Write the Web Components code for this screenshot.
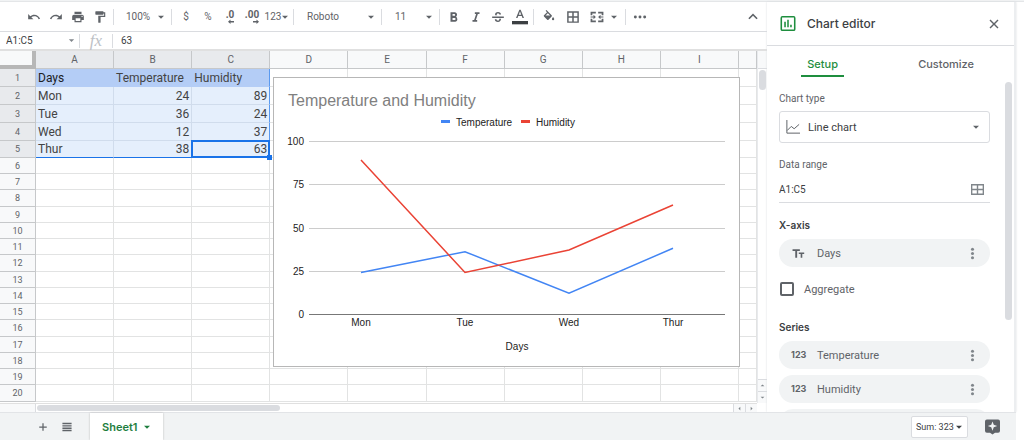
<!DOCTYPE html>
<html lang="en">
<head>
<meta charset="utf-8">
<title>Sheet1 - Chart editor</title>
<style>
  html, body { margin: 0; height: 100%; background: #fff; }
  body { font-family: Roboto, "Liberation Sans", sans-serif; color: #5f6368; overflow: hidden; }
</style>
</head>
<body>
<sheet-app></sheet-app>
<script>
const RESET = `*,*::before,*::after{box-sizing:border-box}
button,input,select{font:inherit;color:inherit;background:none;border:0;margin:0;padding:0;outline:0;border-radius:0;min-width:0}
select{appearance:none}`;

function define(name, markup, setup) {
  const tpl = document.createElement('template');
  tpl.innerHTML = `<style>${RESET}</style>${markup}`;
  customElements.define(name, class extends HTMLElement {
    connectedCallback() {
      if (this.shadowRoot) return;
      const root = this.attachShadow({ mode: 'open' });
      root.append(tpl.content.cloneNode(true));
      if (setup) setup(this, root);
    }
  });
}

const ICONS = {
  undo: '<path d="M12.5 8c-2.65 0-5.05 1-6.9 2.6L2 7v9h9l-3.62-3.62A8 8 0 0 1 20 16l2.4-.8C21 11 17 8 12.500 8z"/>',
  redo: '<path d="M18.400 10.600C16.550 9 14.150 8 11.500 8 7 8 3 11 1.600 15.200L4 16a8 8 0 0 1 12.600-3.600L13 16h9V7z"/>',
  print: '<path d="M19 8H5a3 3 0 0 0-3 3v6h4v4h12v-4h4v-6a3 3 0 0 0-3-3zm-3 11H8v-5h8zm3-7a1 1 0 1 1 0-2 1 1 0 0 1 0 2zM18 3H6v4h12z"/>',
  paint: '<path d="M18 4V3a1 1 0 0 0-1-1H5a1 1 0 0 0-1 1v4c0 .6.500 1 1 1h12c.6 0 1-.4 1-1V6h1v4H9v11c0 .6.500 1 1 1h2c.6 0 1-.4 1-1v-9h8V4z"/>',
  left: '<path d="M10 2v6h14v6H10v6L0 11z"/>',
  right: '<path d="M14 2v6H0v6h14v6l10-9z"/>',
  caret: '<path d="M3 8h18l-9 9z"/>',
  bold: '<path d="M15.600 10.800c1-.7 1.650-1.800 1.650-2.800C17.250 5.700 15.500 4 13.250 4H6v16h8.040c2.090 0 3.710-1.700 3.710-3.800 0-1.600-.86-2.900-2.150-5.400zM9.500 7h3a1.500 1.500 0 0 1 0 3h-3zm3.500 10H9.500v-3.500H13a1.750 1.750 0 0 1 0 3.500z"/>',
  italic: '<path d="M10 4v3h2.200l-3.400 10H6v3h8v-3h-2.200l3.400-10H18V4z"/>',
  strike: '<path d="M2 11h20v2.500H2zM7 9c-.5-4 2-5.500 5-5.500 3.200 0 5.200 1.700 5.200 4.300h-3c0-1.300-.8-2-2.200-2-1.900 0-2.800 1.200-1.800 2.700L11 9zM14 15h3.200c0 3.500-2 5.500-5.200 5.500-3.400 0-5.500-1.900-5.500-4.800h3c0 1.600 1 2.500 2.600 2.500 1.500 0 2.500-1 1.900-3.200z"/>',
  color: '<path d="M11 1 6 13.500h2.300l1.100-3h5.200l1.100 3H18L13 1zm-.8 7.500L12 3.700l1.800 4.800z"/><path fill="#3c4043" d="M0 18h24v5H0z"/>',
  fill: '<path d="M16.600 9 7.600 0 6.200 1.400l2.400 2.400L3.400 9c-.6.6-.6 1.500 0 2.100l5.500 5.500c.3.300.7.400 1.100.4s.800-.1 1.100-.4l5.500-5.500c.5-.6.500-1.500 0-2.100zM6 9.500l4-4 4 4zM19 12s-2 2.200-2 3.500a2 2 0 0 0 4 0c0-1.300-2-3.500-2-3.500z"/>',
  grid: '<path d="M2 2v20h20V2zm8.700 17.500H4.500v-6.200h6.200zm0-8.800H4.500V4.500h6.200zm8.800 8.800h-6.200v-6.200h6.200zm0-8.800h-6.200V4.500h6.200z"/>',
  wide: '<path d="M0 2v20h24V2zm10.700 17.500H2.500v-6.200h8.200zm0-8.800H2.500V4.500h8.200zm10.800 8.800h-8.200v-6.200h8.200zm0-8.800h-8.200V4.500h8.200z"/>',
  merge: '<path d="M1 3h9v3H4v3H1zM14 3h9v6h-3V6h-6zM1 15h3v3h6v3H1zM20 15h3v6h-9v-3h6zM1 11h5V8l4 4-4 4v-3H1zM23 11h-5V8l-4 4 4 4v-3h5z"/>',
  more: '<circle cx="4" cy="12" r="2.500"/><circle cx="12" cy="12" r="2.500"/><circle cx="20" cy="12" r="2.500"/>',
  dots: '<circle cx="12" cy="4" r="2.800"/><circle cx="12" cy="12" r="2.800"/><circle cx="12" cy="20" r="2.800"/>',
  up: '<path d="m12 6-8 8 2 2 6-6 6 6 2-2z"/>',
  close: '<path d="m21 5-2-2-7 7-7-7-2 2 7 7-7 7 2 2 7-7 7 7 2-2-7-7z"/>',
  plus: '<path d="M21 13.500h-7.500V21h-3v-7.500H3v-3h7.500V3h3v7.500H21z"/>',
  list: '<path d="M1 2h22v3.500H1zm0 5.500h22V11H1zM1 13h22v3.500H1zm0 5.500h22V22H1z"/>',
  chart: '<path fill-rule="evenodd" d="M3 0h18a3 3 0 0 1 3 3v18a3 3 0 0 1-3 3H3a3 3 0 0 1-3-3V3a3 3 0 0 1 3-3zm-.5 2.500v19h19v-19zM6 9h2.500v9H6zm4.800-3h2.400v12h-2.400zm4.700 8H18v4h-2.500z"/>',
  line: '<path fill="none" stroke="currentColor" stroke-width="1.700" d="M1.500 0v22.500H24M2 18l7-7 5 4 8.500-7.500"/>',
  text: '<path d="M1 4v3.500h5V20h3.500V7.500h5V4zM22.500 10h-10v3h3.500v7h3v-7h3.500z"/>',
  explore: '<path fill-rule="evenodd" d="M3 0h18a3 3 0 0 1 3 3v15a3 3 0 0 1-3 3h-5l-4 3-4-3H3a3 3 0 0 1-3-3V3a3 3 0 0 1 3-3zm9 3-2 5.500L4.500 10.500 10 12.500l2 5.500 2-5.500 5.500-2L14 8.500z"/>'
};

define('ui-icon', `<style>
  :host{display:inline-flex;width:14px;height:14px;flex:none}
  svg{width:100%;height:100%;display:block;fill:currentColor}
</style><svg viewBox="0 0 24 24" aria-hidden="true"></svg>`, (el, root) => {
  root.querySelector('svg').innerHTML = ICONS[el.getAttribute('name')];
});

/* A square toolbar button: icon or short text in the slot. */
define('tool-button', `<style>
  :host{display:flex;width:22px;height:22px}
  button{display:flex;flex:1;align-items:center;justify-content:center;font-size:10px;line-height:14px}
</style><button type="button"><slot></slot></button>`, (el, root) => {
  root.querySelector('button').setAttribute('aria-label', el.getAttribute('label'));
});

/* A drop-down with its own arrow. */
define('drop-down', `<style>
  :host{display:flex;align-items:center;position:relative;font-size:10px}
  select{flex:1;width:100%;height:100%;padding:0 0 0 var(--pad,10px)}
  ui-icon{position:absolute;right:4px;width:8px;height:8px;pointer-events:none}
</style><select><option></option></select><ui-icon name="caret"></ui-icon>`, (el, root) => {
  root.querySelector('option').textContent = el.getAttribute('value');
  root.querySelector('select').setAttribute('aria-label', el.getAttribute('label'));
});

define('tool-bar', `<style>
  :host{display:flex;align-items:center;height:30px;padding:0 3px 0 23px;border-bottom:1px solid #dadce0;color:#5f6368}
  i{width:1px;height:16px;background:#dadce0;margin:0 3px 0 2px;flex:none}
  .dec{display:flex;flex-direction:column;align-items:flex-end;font-weight:700;font-size:10px;line-height:8px;padding-top:3px}
  .dec ui-icon{width:6px;height:6px}
  .zoom{width:52px;height:22px;--pad:9px}
  .font{width:82px;height:22px}
  .size{width:52px;height:22px}
  .num{width:28px}
  .num ui-icon,.mini{width:8px;height:8px}
  .fmt{width:24px}
  .mini{margin:0 5px 0 1px}
  .color ui-icon{width:16px;height:16px}
  .end{margin-left:auto}
</style>
<tool-button label="Undo"><ui-icon name="undo"></ui-icon></tool-button>
<tool-button label="Redo"><ui-icon name="redo"></ui-icon></tool-button>
<tool-button label="Print"><ui-icon name="print"></ui-icon></tool-button>
<tool-button label="Paint format"><ui-icon name="paint"></ui-icon></tool-button>
<i></i>
<drop-down class="zoom" label="Zoom" value="100%"></drop-down>
<i></i>
<tool-button label="Currency">$</tool-button>
<tool-button label="Percent">%</tool-button>
<tool-button label="Decrease decimal places"><span class="dec">.0<ui-icon name="left"></ui-icon></span></tool-button>
<tool-button label="Increase decimal places"><span class="dec">.00<ui-icon name="right"></ui-icon></span></tool-button>
<tool-button class="num" label="More formats">123<ui-icon name="caret"></ui-icon></tool-button>
<i></i>
<drop-down class="font" label="Font" value="Roboto"></drop-down>
<i></i>
<drop-down class="size" label="Font size" value="11"></drop-down>
<i></i>
<tool-button label="Bold"><ui-icon name="bold"></ui-icon></tool-button>
<tool-button label="Italic"><ui-icon name="italic"></ui-icon></tool-button>
<tool-button label="Strikethrough"><ui-icon name="strike"></ui-icon></tool-button>
<tool-button class="color" label="Text color"><ui-icon name="color"></ui-icon></tool-button>
<i></i>
<tool-button class="fmt" label="Fill color"><ui-icon name="fill"></ui-icon></tool-button>
<tool-button class="fmt" label="Borders"><ui-icon name="grid"></ui-icon></tool-button>
<tool-button class="fmt" label="Merge cells"><ui-icon name="merge"></ui-icon></tool-button>
<ui-icon class="mini" name="caret"></ui-icon>
<i></i>
<tool-button label="More"><ui-icon name="more"></ui-icon></tool-button>
<tool-button class="end" label="Hide the menus"><ui-icon name="up"></ui-icon></tool-button>`);

define('formula-bar', `<style>
  :host{display:flex;align-items:center;height:19px;border-bottom:2px solid #e0e0e0;color:#3c4043;font-size:10px}
  .name{width:68px;padding-left:6px;height:16px}
  ui-icon{width:7px;height:7px;margin-right:4px;color:#80868b}
  i{width:1px;height:14px;background:#dadce0}
  .fx{width:32px;text-align:center;font:italic 17px/16px "Liberation Serif",serif;color:#bdc1c6}
  .value{flex:1;padding-left:8px;height:16px}
</style>
<input class="name" aria-label="Name box" value="A1:C5"><ui-icon name="caret"></ui-icon><i></i>
<span class="fx">fx</span>
<i></i>
<input class="value" aria-label="Formula" value="63">`);

define('line-chart', `<style>
  :host{display:block;background:#fff;border:1px solid #b7b7b7;width:467px;height:290px}
  svg{display:block;width:465px;height:288px;font-family:"Liberation Sans",sans-serif;font-size:10px;fill:#222}
</style><svg viewBox="1 1 465 288" role="img" aria-label="Line chart of temperature and humidity"></svg>`, (el, root) => {
  const days = ['Mon', 'Tue', 'Wed', 'Thur'];
  const series = [['#4285f4', [24, 36, 12, 38]], ['#ea4335', [89, 24, 37, 63]]];
  const px = i => 88 + 104 * i, py = v => 237 - 1.73 * v;
  let s = '<text x="15" y="29" font-size="16" fill="#808080">Temperature and Humidity</text>';
  s += '<path fill="#4285f4" d="M168 43h9v3h-9z"/><text x="183" y="49">Temperature</text>';
  s += '<path fill="#ea4335" d="M248 43h9v3h-9z"/><text x="263" y="49">Humidity</text>';
  for (const v of [100, 75, 50, 25, 0]) {
    const y = Math.round(py(v));
    s += `<path fill="${v ? '#ccc' : '#777'}" d="M36 ${y}h416v1H36z"/><text x="31" y="${y + 4}" text-anchor="end">${v}</text>`;
  }
  days.forEach((d, i) => s += `<text x="${px(i)}" y="249" text-anchor="middle">${d}</text>`);
  s += '<text x="244" y="273" text-anchor="middle">Days</text>';
  for (const [c, vals] of series)
    s += `<polyline fill="none" stroke="${c}" stroke-width="1.500" points="${vals.map((v, i) => px(i) + ',' + py(v)).join(' ')}"/>`;
  root.querySelector('svg').innerHTML = s;
});

define('data-grid', `<style>
  :host{display:block;font-size:12px;color:#434343}
  table{width:100%;table-layout:fixed;border-collapse:separate;border-spacing:0}
  .head{width:36px}.rest{width:18px}
  th,td{height:16px;padding:0 2px;border:solid #e2e3e3;border-width:0 1px 1px 0;font-weight:400;line-height:14px;white-space:nowrap}
  th{background:#f8f9fa;color:#5f6368;font-size:9px;text-align:center;border-color:#c6c8ca}
  thead th{height:18px;font-size:10px}
  tbody tr:nth-child(4n) > *{height:17px}
  tbody tr.data > *{height:18px;line-height:16px}
  tbody tr.last > *{height:17px}
  th.on{background:#e8eaed}
  .corner{border:solid #b7b7b7;border-width:0 4px 4px 0}
  .data td.in{background:#e5effc;border-color:#d0dcec}
  .data:first-child td.in{background:#b4cdf6;border-color:#b4cdf6}
  .data:first-child td.in:nth-child(2){color:#202124}
  td.n{text-align:right}
  .data td.edge.in{border-right-color:#5a9af0}
  .data.last td.in{border-bottom-color:#1a73e8}
  td.active{position:relative}
  td.active::before{content:"";position:absolute;inset:-1px;border:2px solid #1a73e8}
  td.active::after{content:"";position:absolute;right:-3px;bottom:-3px;width:5px;height:5px;background:#1a73e8}
</style><table><colgroup></colgroup><thead></thead><tbody></tbody></table>`, (el, root) => {
  const cols = 'ABCDEFGHI';
  const data = [['Days', 'Temperature', 'Humidity'], ['Mon', 24, 89], ['Tue', 36, 24], ['Wed', 12, 37], ['Thur', 38, 63]];
  root.querySelector('colgroup').innerHTML = '<col class="head">' + '<col>'.repeat(9) + '<col class="rest">';
  root.querySelector('thead').innerHTML = '<tr><th class="corner"></th>' +
    [...cols].map((c, i) => `<th scope="col"${i < 3 ? ' class="on"' : ''}>${c}</th>`).join('') + '<th></th></tr>';
  let body = '';
  for (let r = 0; r < 20; r++) {
    const row = data[r];
    body += `<tr class="${row ? 'data' : ''}${r === 4 ? ' last' : ''}"><th scope="row"${row ? ' class="on"' : ''}>${r + 1}</th>`;
    for (let c = 0; c < 10; c++) {
      const v = row && row[c];
      const k = [row && c < 3 && 'in', typeof v === 'number' && 'n', c === 2 && 'edge', r === 4 && c === 2 && 'active'].filter(Boolean).join(' ');
      body += `<td class="${k}">${v ?? ''}</td>`;
    }
    body += '</tr>';
  }
  root.querySelector('tbody').innerHTML = body;
});

define('scroll-bars', `<style>
  :host{display:flex;background:#fff}
  :host([axis=y]){flex-direction:column;width:10px;border-left:1px solid #e8eaed}
  :host([axis=x]){height:9px;border-top:1px solid #e0e0e0}
  .lead{background:#f8f9fa;border:solid #dadce0}
  :host([axis=y]) .lead{height:18px;border-width:0 0 1px}
  :host([axis=x]) .lead{width:36px;border-width:0 1px 0 0}
  .track{flex:1;padding:1px}
  .thumb{background:#dadce0;border-radius:4px}
  :host([axis=y]) .thumb{height:20px}
  :host([axis=x]) .thumb{height:6px;width:35%}
  button{display:flex;align-items:center;justify-content:center;border:solid #dadce0;background:#f8f9fa;color:#80868b}
  :host([axis=y]) button{height:12px;border-width:1px 0 0}
  :host([axis=x]) button{width:12px;border-width:0 0 0 1px}
  ui-icon{width:5px;height:5px}
  :host([axis=y]) .a{transform:rotate(180deg)}
  :host([axis=x]) .a{transform:rotate(90deg)}
  :host([axis=x]) .b{transform:rotate(-90deg)}
</style><div class="lead"></div><div class="track"><div class="thumb"></div></div>
<button type="button" aria-label="Scroll back"><ui-icon class="a" name="caret"></ui-icon></button>
<button type="button" aria-label="Scroll forward"><ui-icon class="b" name="caret"></ui-icon></button>`);

define('field-pill', `<style>
  :host{display:flex;align-items:center;height:28px;border-radius:14px;background:#f1f3f4;padding:0 8px 0 12px;font-size:11px}
  .kind{width:26px;display:flex;font:700 9px/14px Inter,sans-serif;color:#5f6368}
  .kind ui-icon{width:13px;height:13px;margin-left:1px}
  .name{flex:1}
  button{width:20px;height:20px;display:flex;align-items:center;justify-content:center;color:#80868b}
  button ui-icon{width:13px;height:13px}
</style><span class="kind"></span><span class="name"><slot></slot></span>
<button type="button" aria-label="More options"><ui-icon name="dots"></ui-icon></button>`, (el, root) => {
  const kinds = { text: '<ui-icon name="text"></ui-icon>', number: '123' };
  root.querySelector('.kind').innerHTML = kinds[el.getAttribute('kind')] || '';
});

define('chart-editor', `<style>
  :host{display:flex;flex-direction:column;overflow:hidden;background:#fff;border-right:2px solid #eceef0;box-shadow:0 0 2px #dadce0;font-size:11px}
  header{display:flex;align-items:center;height:44px;flex:none;padding:0 14px 0 13px;border-bottom:1px solid #dadce0;font-family:Inter,sans-serif}
  header > ui-icon{width:16px;height:15px;color:#1e8e3e}
  h2{flex:1;margin:0 0 0 11px;font-size:12px;font-weight:500;color:#3c4043}
  header button{display:flex}
  header button ui-icon{width:12px;height:12px}
  nav{display:flex;height:31px;flex:none;font-family:Inter,sans-serif;font-size:11px;font-weight:500}
  nav button{display:flex;flex:1;justify-content:center;padding-top:6px}
  nav span{padding:5px 6px 0;border-bottom:2px solid transparent;height:25px}
  nav .on{color:#1e8e3e;flex:0 0 45%}
  nav .on span{border-color:#1e8e3e}
  .body{display:flex;flex:1;min-height:0}
  form{display:flex;flex-direction:column;flex:1;padding:15px 15px 0 12px;overflow:hidden}
  form > *{flex:none}
  .cap{font-size:10px;line-height:14px;height:14px}
  .type{display:flex;position:relative;align-items:center;height:32px;margin:5px 0 15px;border:1px solid #dadce0;border-radius:3px}
  .type select{flex:1;height:30px;padding-left:28px;color:#3c4043}
  .type ui-icon{position:absolute;left:6px;pointer-events:none}
  .type .arr{left:auto;right:9px;width:8px;height:8px}
  .range{display:flex;align-items:center;height:26px;margin:5px 0 15px;border-bottom:1px solid #dadce0;padding-right:6px}
  .range input{flex:1;font-size:10px;color:#3c4043}
  .range ui-icon{width:13px;height:13px;color:#80868b}
  h3{margin:0 0 7px;font:600 10px/14px Inter,sans-serif;color:#3c4043}
  .agg{display:flex;align-items:center;gap:10px;height:14px;margin:15px 0 24px 1px}
  .agg input{appearance:none;width:14px;height:14px;border:2px solid #5f6368;border-radius:2px}
  .series{display:grid;gap:6px}
  .bar{width:7px;margin:5px 2px 0 0}
  .bar div{height:72%;background:#dadce0;border-radius:4px}
</style>
<header><ui-icon name="chart"></ui-icon><h2>Chart editor</h2>
<button type="button" aria-label="Close"><ui-icon name="close"></ui-icon></button></header>
<nav><button type="button" class="on"><span>Setup</span></button><button type="button"><span>Customize</span></button></nav>
<div class="body"><form>
  <label class="cap" for="type">Chart type</label>
  <div class="type"><select id="type"><option>Line chart</option></select><ui-icon name="line"></ui-icon><ui-icon class="arr" name="caret"></ui-icon></div>
  <label class="cap" for="range">Data range</label>
  <div class="range"><input id="range" value="A1:C5"><ui-icon name="wide"></ui-icon></div>
  <h3>X-axis</h3>
  <field-pill kind="text">Days</field-pill>
  <label class="agg"><input type="checkbox">Aggregate</label>
  <h3>Series</h3>
  <div class="series">
    <field-pill kind="number">Temperature</field-pill>
    <field-pill kind="number">Humidity</field-pill>
    <field-pill></field-pill>
  </div>
</form><div class="bar"><div></div></div></div>`);

define('sheet-tabs', `<style>
  :host{display:flex;align-items:center;background:#f1f3f4;border-top:1px solid #e2e4e7;padding:0 16px 0 31px}
  .tool{display:flex;width:24px;height:24px;align-items:center;justify-content:center;color:#5f6368}
  .tool ui-icon{width:10px;height:10px}
  .tab{display:flex;align-self:stretch;align-items:center;gap:6px;margin-left:11px;padding:0 12px;background:#fff;color:#1e7e3e;font:600 11px Inter,sans-serif;box-shadow:0 0 2px #bbb}
  .tab ui-icon{width:8px;height:8px}
  .sum{margin-left:auto;width:57px;height:22px;background:#fff;border:1px solid #dadce0;border-radius:2px;--pad:4px;color:#3c4043;font-size:9px}
  .explore{display:flex;margin-left:17px;color:#5f6368}
  .explore ui-icon{width:15px;height:16px}
</style>
<button type="button" class="tool" aria-label="Add sheet"><ui-icon name="plus"></ui-icon></button>
<button type="button" class="tool" aria-label="All sheets"><ui-icon name="list"></ui-icon></button>
<button type="button" class="tab">Sheet1<ui-icon name="caret"></ui-icon></button>
<drop-down class="sum" label="Summary" value="Sum: 323"></drop-down>
<button type="button" class="explore" aria-label="Explore"><ui-icon name="explore"></ui-icon></button>`);

define('sheet-app', `<style>
  :host{display:grid;height:100vh;grid-template:2px minmax(0,1fr) 28px / minmax(0,1fr) 249px 8px}
  .top{grid-column:1/-1;background:#f1f3f4;border-bottom:1px solid #e4e6e8}
  main{display:flex;flex-direction:column;min-height:0}
  .sheet{display:grid;flex:1;min-height:0;grid-template:minmax(0,1fr) auto / minmax(0,1fr) auto}
  .canvas{position:relative;overflow:hidden;grid-area:1/1}
  line-chart{position:absolute;left:273px;top:26px}
  .y{grid-area:1/2}
  .x{grid-area:2/1}
  sheet-tabs{grid-column:1/3;grid-row:3}
</style>
<div class="top"></div>
<main>
  <tool-bar></tool-bar>
  <formula-bar></formula-bar>
  <div class="sheet">
    <div class="canvas"><data-grid></data-grid><line-chart></line-chart></div>
    <scroll-bars class="y" axis="y"></scroll-bars>
    <scroll-bars class="x" axis="x"></scroll-bars>
  </div>
</main>
<chart-editor></chart-editor>
<sheet-tabs></sheet-tabs>`);
</script>
</body>
</html>
